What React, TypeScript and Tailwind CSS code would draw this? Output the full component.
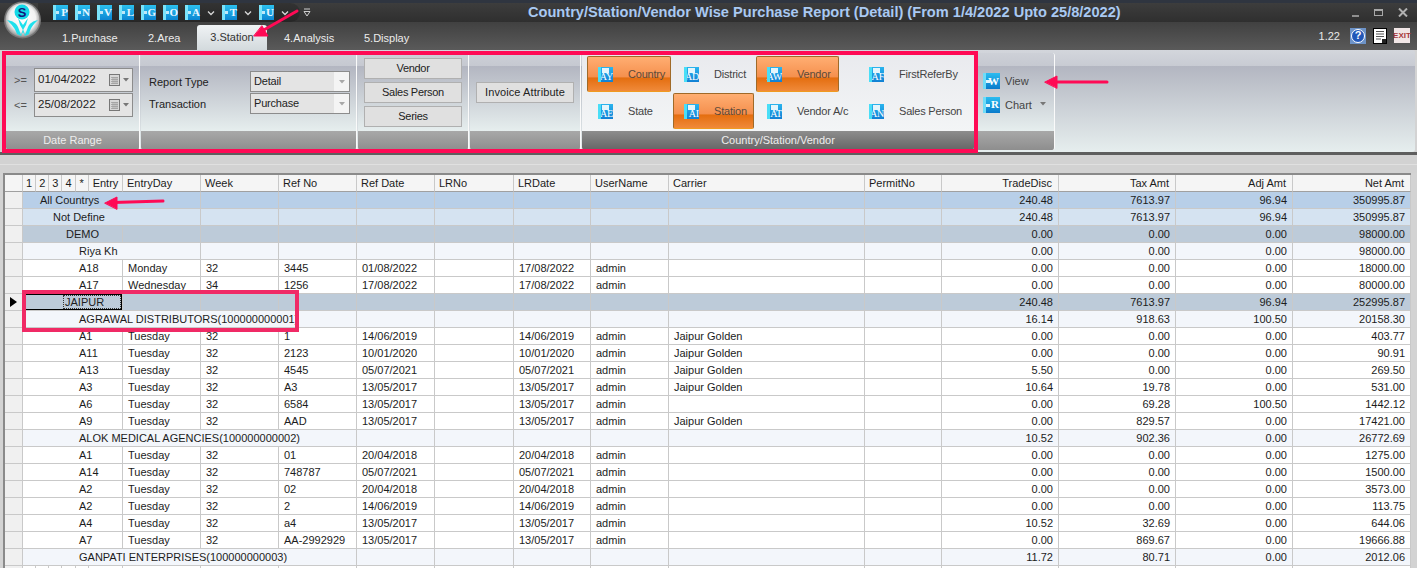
import React from "react";

const FONT = "font-['Liberation_Sans',Arial,sans-serif]";

type Row = {
  kind: "all" | "country" | "state" | "party" | "vendor" | "entry";
  label: string;
  day?: string;
  week?: string;
  ref?: string;
  date?: string;
  lrDate?: string;
  carrier?: string;
  amts: string[];
  selected?: boolean;
};

function entry(label: string, day: string, week: string, ref: string, date: string, carrier: string, amts: string[], lrDate?: string): Row {
  return { kind: "entry", label, day, week, ref, date, lrDate: lrDate ?? date, carrier, amts };
}

const JG = "Jaipur Golden";
const rows: Row[] = [
  { kind: "all", label: "All Countrys", amts: ["240.48", "7613.97", "96.94", "350995.87"] },
  { kind: "country", label: "Not Define", amts: ["240.48", "7613.97", "96.94", "350995.87"] },
  { kind: "state", label: "DEMO", amts: ["0.00", "0.00", "0.00", "98000.00"] },
  { kind: "party", label: "Riya Kh", amts: ["0.00", "0.00", "0.00", "98000.00"] },
  entry("A18", "Monday", "32", "3445", "01/08/2022", "", ["0.00", "0.00", "0.00", "18000.00"], "17/08/2022"),
  entry("A17", "Wednesday", "34", "1256", "17/08/2022", "", ["0.00", "0.00", "0.00", "80000.00"]),
  { kind: "state", label: "JAIPUR", selected: true, amts: ["240.48", "7613.97", "96.94", "252995.87"] },
  { kind: "vendor", label: "AGRAWAL DISTRIBUTORS(100000000001)", amts: ["16.14", "918.63", "100.50", "20158.30"] },
  entry("A1", "Tuesday", "32", "1", "14/06/2019", JG, ["0.00", "0.00", "0.00", "403.77"]),
  entry("A11", "Tuesday", "32", "2123", "10/01/2020", JG, ["0.00", "0.00", "0.00", "90.91"]),
  entry("A13", "Tuesday", "32", "4545", "05/07/2021", JG, ["5.50", "0.00", "0.00", "269.50"]),
  entry("A3", "Tuesday", "32", "A3", "13/05/2017", JG, ["10.64", "19.78", "0.00", "531.00"]),
  entry("A6", "Tuesday", "32", "6584", "13/05/2017", "", ["0.00", "69.28", "100.50", "1442.12"]),
  entry("A9", "Tuesday", "32", "AAD", "13/05/2017", JG, ["0.00", "829.57", "0.00", "17421.00"]),
  { kind: "vendor", label: "ALOK MEDICAL AGENCIES(100000000002)", amts: ["10.52", "902.36", "0.00", "26772.69"] },
  entry("A1", "Tuesday", "32", "01", "20/04/2018", "", ["0.00", "0.00", "0.00", "1275.00"]),
  entry("A14", "Tuesday", "32", "748787", "05/07/2021", "", ["0.00", "0.00", "0.00", "1500.00"]),
  entry("A2", "Tuesday", "32", "02", "20/04/2018", "", ["0.00", "0.00", "0.00", "3573.00"]),
  entry("A2", "Tuesday", "32", "2", "14/06/2019", "", ["0.00", "0.00", "0.00", "113.75"]),
  entry("A4", "Tuesday", "32", "a4", "13/05/2017", "", ["10.52", "32.69", "0.00", "644.06"]),
  entry("A7", "Tuesday", "32", "AA-2992929", "13/05/2017", "", ["0.00", "869.67", "0.00", "19666.88"]),
  { kind: "vendor", label: "GANPATI ENTERPRISES(100000000003)", amts: ["11.72", "80.71", "0.00", "2012.06"] },
];

const rowBg: Record<Row["kind"], string> = {
  all: "bg-[#b8cfe8]",
  country: "bg-[#d5e3f1]",
  state: "bg-[#bdcbd9]",
  party: "bg-[#f3f6fb]",
  vendor: "bg-[#f3f6fb]",
  entry: "bg-white",
};
const indent: Record<Row["kind"], string> = {
  all: "pl-[17px]",
  country: "pl-[30px]",
  state: "pl-[43px]",
  party: "pl-[56px]",
  vendor: "pl-[56px]",
  entry: "pl-[56px]",
};

const colWidths = [18, 13, 13, 13, 13, 13, 34, 78, 78, 78, 78, 79, 77, 78, 196, 77, 117, 117, 117, 118];

const cell = "h-[17px] p-0 border-r border-b border-[#c9c9c9] whitespace-nowrap";
const left = `${cell} pl-[5px] text-left`;
const right = `${cell} pr-[5px] text-right`;
const head = "h-[17px] p-0 bg-[#f5f5f5] border-r border-b border-r-[#c9c9c9] border-b-[#a0a0a0] font-normal whitespace-nowrap";

function BlueIcon({ letter, big }: { letter: string; big?: boolean }) {
  if (big) {
    return (
      <span className="relative flex h-[16px] w-[17px] shrink-0 items-center justify-end bg-gradient-to-b from-[#2bbcf0] to-[#0b7bcb] pr-[1px] font-['Liberation_Serif',serif] text-[11px] font-bold leading-none text-white">
        <span className="absolute left-0 top-0 h-full w-[3px] bg-[#6fdcf8]" />
        <span className="absolute left-[3px] top-[7px] h-[3px] w-[4px] bg-[#e4f5fc]" />
        {letter}
      </span>
    );
  }
  return (
    <span className="relative flex h-[15px] w-[15px] shrink-0 items-end justify-end bg-gradient-to-b from-[#2ab4ee] to-[#1180d4] font-['Liberation_Serif',serif] text-[10px] leading-[10px] text-white">
      <span className="absolute left-0 top-0 h-full w-[3px] bg-[#49def7]" />
      <span className="absolute left-[4px] top-[1px] h-[5px] w-[7px] bg-[#e4f5fc]" />
      <span>A{letter}</span>
    </span>
  );
}

function ToolIcon({ letter, chevron }: { letter: string; chevron?: boolean }) {
  return (
    <div className="flex items-center">
      <span className="relative flex h-[15px] w-[15px] items-center justify-end bg-gradient-to-b from-[#2cc0ef] to-[#0c86d2] font-['Liberation_Serif',serif] text-[11px] font-bold leading-none text-[#e8f6ff]">
        <span className="absolute left-0 top-0 h-full w-[3px] bg-[#7be3fa]" />
        <span className="absolute left-[3px] top-[6px] h-[3px] w-[3px] bg-[#bfe7f7]" />
        {letter}
      </span>
      {chevron && (
        <svg width="8" height="6" viewBox="0 0 8 6" className="ml-[7px]">
          <path d="M1 1.5 L4 4.5 L7 1.5" fill="none" stroke="#d8d8d8" strokeWidth="1.3" />
        </svg>
      )}
    </div>
  );
}

function Logo() {
  return (
    <svg width="40" height="40" viewBox="0 0 40 40" className="absolute left-[3px] top-[0px]">
      <defs>
        <radialGradient id="lg" cx="50%" cy="45%" r="55%">
          <stop offset="0%" stopColor="#ffffff" />
          <stop offset="70%" stopColor="#f2f2f2" />
          <stop offset="100%" stopColor="#8f8f8f" />
        </radialGradient>
      </defs>
      <circle cx="19.5" cy="20" r="18.5" fill="#777" />
      <circle cx="19.5" cy="20" r="17" fill="url(#lg)" />
      <circle cx="19" cy="12" r="7.5" fill="#14d8e8" />
      <text x="19" y="16.5" textAnchor="middle" fontSize="13" fontWeight="700" fill="#15157a" fontFamily="Liberation Sans, sans-serif">S</text>
      <path d="M4 20 C10 21 13 23 15 27 L18 35 L20 29 L22 35 L25 27 C27 23 30 21 35 20 C30 25 28 27 26 34 L22 36 L20 32 L18 36 L14 34 C12 28 9 25 4 20 Z" fill="#1fe0ec" />
      <path d="M15 18 L20 25 L25 18 L23 25 L20 30 L17 25 Z" fill="#1fe0ec" />
    </svg>
  );
}

function DateField({ value }: { value: string }) {
  return (
    <div className="flex h-[24px] w-[99px] items-center border border-[#8c8c8c] bg-[#e4e4e4] pl-[3px] text-[11.5px] text-[#222]">
      <span className="w-[71px]">{value}</span>
      <svg width="11" height="12" viewBox="0 0 11 12">
        <rect x="0.5" y="0.5" width="10" height="11" fill="#d8d8d8" stroke="#777" />
        <path d="M2 3.5H9M2 5.5H9M2 7.5H9M2 9.5H9M4 3V10M6 3V10M8 3V10" stroke="#999" strokeWidth="0.7" />
      </svg>
      <svg width="6" height="4" viewBox="0 0 6 4" className="ml-[3px]">
        <path d="M0 0H6L3 3.5Z" fill="#777" />
      </svg>
    </div>
  );
}

function Combo({ value }: { value: string }) {
  return (
    <div className="flex h-[21px] w-[100px] items-center border border-[#8c8c8c] bg-[#e4e4e4] pl-[3px] text-[11px] tracking-[-0.2px] text-[#222]">
      <span className="flex-1">{value}</span>
      <span className="flex h-full w-[15px] items-center justify-center bg-[#f4f4f4]">
        <svg width="6" height="4" viewBox="0 0 6 4">
          <path d="M0 0H6L3 3.5Z" fill="#a8a8a8" />
        </svg>
      </span>
    </div>
  );
}

function PlainButton({ label, tight = true }: { label: string; tight?: boolean }) {
  return (
    <div className={`flex h-[21px] w-[98px] items-center justify-center border border-[#b0b0b0] bg-[#e0e0e0] text-[11px] text-[#222] ${tight ? "tracking-[-0.3px]" : "tracking-[0.1px]"}`}>
      {label}
    </div>
  );
}

function Group({ width, caption, dark, body, children }: { width: string; caption?: string; dark?: boolean; body?: string; children: React.ReactNode }) {
  return (
    <div className={`${width} flex h-[97px] shrink-0 flex-col overflow-hidden rounded-[3px] border-r border-[#fafafa]`}>
      <div className={`flex-1 ${body ?? "bg-[linear-gradient(#cdd0d7_0,#c6c9d1_13px,#b3b6c1_13px,#e6eeee_100%)]"}`}>{children}</div>
      <div
        className={`flex h-[19px] items-center justify-center text-[11px] text-[#eee] ${
          dark ? "bg-gradient-to-b from-[#8d8d8d] to-[#666]" : "bg-gradient-to-b from-[#a8a8a8] to-[#8e8e8e]"
        }`}
      >
        {caption}
      </div>
    </div>
  );
}

const pickers = [
  { label: "Country", letter: "Y", on: true, cls: "pl-[10px]" },
  { label: "District", letter: "D", on: false, cls: "pl-[11px]" },
  { label: "Vendor", letter: "W", on: true, cls: "pl-[10px]" },
  { label: "FirstReferBy", letter: "F", on: false, cls: "pl-[28px]" },
  { label: "State", letter: "E", on: false, cls: "pl-[11px]" },
  { label: "Station", letter: "I", on: true, cls: "pl-[10px]" },
  { label: "Vendor A/c", letter: "T", on: false, cls: "pl-[11px]" },
  { label: "Sales Person", letter: "N", on: false, cls: "pl-[28px]" },
];

export default function App() {
  return (
    <div className={`relative h-[568px] w-[1417px] overflow-hidden bg-[#d3d3d3] text-[11px] ${FONT}`}>
      {/* title bar */}
      <div className="flex h-[22px] items-center border-t-[3px] border-[#2f3540] bg-gradient-to-b from-[#3d3d3d] to-[#2f2f2f]">
        <div className="ml-[38px] flex h-[19px] w-[262px] items-center rounded-r-[14px] bg-gradient-to-b from-[#333] to-[#262626] pl-[15px]">
          <div className="flex items-center gap-[7px]">
            {["P", "N", "V", "L", "G", "O"].map((l) => (
              <ToolIcon key={l} letter={l} />
            ))}
            <ToolIcon letter="A" chevron />
            <ToolIcon letter="T" chevron />
            <ToolIcon letter="U" chevron />
          </div>
        </div>
        <svg width="8" height="9" viewBox="0 0 8 9" className="ml-[3px]">
          <path d="M1 1H7M1 3.5H7L4 8Z" fill="none" stroke="#cfcfcf" />
        </svg>
        <div className="ml-[217px] whitespace-nowrap text-[14.6px] font-bold text-[#a9c9f2]">
          Country/Station/Vendor Wise Purchase Report (Detail) (From 1/4/2022 Upto 25/8/2022)
        </div>
        <div className="ml-auto flex items-center gap-[15px] pr-[9px]">
          <span className="mt-[6px] h-[2px] w-[7px] bg-[#8f8f8f]" />
          <span className="h-[7px] w-[9px] border border-t-[2px] border-[#a8a8a8]" />
          <svg width="10" height="9" viewBox="0 0 10 9">
            <path d="M1 0.5L9 8.5M9 0.5L1 8.5" stroke="#b0b0b0" strokeWidth="2" />
          </svg>
        </div>
      </div>

      {/* tabs */}
      <div className="flex h-[28px] items-end bg-gradient-to-b from-[#414141] to-[#5a5a5a] pl-[62px] text-[11px] text-[#ececec]">
        <div className="mb-[4px] w-[86px]">1.Purchase</div>
        <div className="mb-[4px] w-[49px]">2.Area</div>
        <div className="flex h-[25px] w-[70px] items-center justify-center rounded-t-[3px] bg-gradient-to-b from-[#f0f3f5] to-[#d3dadd] text-[#333]">3.Station</div>
        <div className="mb-[4px] ml-[17px] w-[80px]">4.Analysis</div>
        <div className="mb-[4px]">5.Display</div>
        <div className="mb-[6px] ml-auto flex items-center pr-[7px]">
          <span className="mr-[10px] text-[11px] text-[#e8e8e8]">1.22</span>
          <span className="mr-[7px] flex h-[16px] w-[16px] items-center justify-center bg-[#6d93c8]">
            <span className="flex h-[14px] w-[14px] items-center justify-center rounded-full border border-white bg-[#2258b8] text-[11px] font-bold leading-none text-white">?</span>
          </span>
          <svg width="14" height="16" viewBox="0 0 14 16" className="mr-[7px]">
            <rect x="0.5" y="0.5" width="13" height="15" fill="#fff" stroke="#000" />
            <path d="M3 3.5H11M3 6H11M3 8.5H11M3 11H8" stroke="#555" />
            <rect x="9" y="11" width="4" height="4" fill="#222" />
          </svg>
          <span className="flex h-[15px] w-[16px] items-center justify-center bg-[#f1e6e6] text-[8px] font-bold leading-none text-[#a83a3a]">EXIT</span>
        </div>
      </div>

      {/* ribbon */}
      <div className="mx-[2px] flex h-[102px] items-start gap-[1px] rounded-[3px] bg-[linear-gradient(#d3d6dc_0,#c8cbd3_16px,#b3b6c1_16px,#e6eeee_100%)] pl-[4px] pt-[3px]">
        <Group width="w-[134px]" caption="Date Range">
          <div className="flex items-start pl-[8px] pt-[15px]">
            <div className="w-[20px] text-[11px] leading-[25px] text-[#555]">
              <div>{">="}</div>
              <div>{"<="}</div>
            </div>
            <div className="flex flex-col gap-[1px]">
              <DateField value="01/04/2022" />
              <DateField value="25/08/2022" />
            </div>
          </div>
        </Group>
        <Group width="w-[216px]" caption="">
          <div className="flex gap-[21px] pl-[8px] pt-[18px]">
            <div className="w-[80px] text-[11px] leading-[22px] text-[#222]">
              <div>Report Type</div>
              <div>Transaction</div>
            </div>
            <div className="flex flex-col gap-[1px]">
              <Combo value="Detail" />
              <Combo value="Purchase" />
            </div>
          </div>
        </Group>
        <Group width="w-[111px]" caption="">
          <div className="flex flex-col gap-[3px] pl-[6px] pt-[5px]">
            <PlainButton label="Vendor" />
            <PlainButton label="Sales Person" />
            <PlainButton label="Series" />
          </div>
        </Group>
        <Group width="w-[111px]" caption="">
          <div className="pl-[6px] pt-[29px]">
            <PlainButton label="Invoice Attribute" tight={false} />
          </div>
        </Group>
        <Group width="w-[393px]" caption="Country/Station/Vendor" dark body="bg-gradient-to-b from-[#e9eaee] to-[#f3f5f6]">
          <div className="grid grid-cols-[84px_81px_83px_125px] grid-rows-[36px_36px] gap-x-[2px] gap-y-[1px] pl-[5px] pt-[3px]">
            {pickers.map((p) => (
              <div
                key={p.label}
                className={`flex items-center whitespace-nowrap tracking-[-0.2px] ${p.cls} text-[11px] ${
                  p.on
                    ? "rounded-[2px] border border-[#a06a28] border-b-[#f09a20] bg-[linear-gradient(#ffae72_0,#f5904e_58%,#e46e10_62%,#f08a3a_100%)] text-[#5a4a3a]"
                    : "text-[#444]"
                }`}
              >
                <span className="mr-[15px]">
                  <BlueIcon letter={p.letter} />
                </span>
                {p.label}
              </div>
            ))}
          </div>
        </Group>
        <Group width="w-[79px]">
          <div className="flex flex-col gap-[7px] pl-[7px] pt-[20px] text-[11px] text-[#444]">
            <div className="flex items-center gap-[5px]">
              <BlueIcon letter="W" big />
              View
            </div>
            <div className="flex items-center gap-[5px]">
              <BlueIcon letter="R" big />
              Chart
              <svg width="6" height="4" viewBox="0 0 6 4" className="ml-[3px] mb-[2px]">
                <path d="M0 0H6L3 3.5Z" fill="#777" />
              </svg>
            </div>
          </div>
        </Group>
      </div>

      {/* strip above grid */}
      <div className="h-[21px] border-t-[3px] border-[#5e5e5e] bg-[#d2d2d2]">
        <div className="h-[9px]" />
        <div className="h-[1px] bg-[#e0e0e0]" />
      </div>

      {/* grid */}
      <div className="ml-[3px] w-[1408px] border-l-2 border-t-2 border-[#8a8a8a] bg-white">
        <table className="table-fixed border-separate border-spacing-0 text-[11px] leading-[14px] text-[#1c1c1c]">
          <colgroup>
            {colWidths.map((w, i) => (
              <col key={i} style={{ width: w }} />
            ))}
          </colgroup>
          <thead>
            <tr>
              <th className={head} />
              {["1", "2", "3", "4", "*"].map((h) => (
                <th key={h} className={`${head} text-center`}>{h}</th>
              ))}
              {["Entry", "EntryDay", "Week", "Ref No", "Ref Date", "LRNo", "LRDate", "UserName", "Carrier", "PermitNo"].map((h) => (
                <th key={h} className={`${head} pl-[4px] text-left`}>{h}</th>
              ))}
              {["TradeDisc", "Tax Amt", "Adj Amt", "Net Amt"].map((h) => (
                <th key={h} className={`${head} pr-[6px] text-right`}>{h}</th>
              ))}
            </tr>
          </thead>
          <tbody>
            {rows.map((r, i) => {
              const span = r.kind === "vendor" ? 9 : r.kind === "all" || r.kind === "country" || r.kind === "party" ? 7 : 6;
              return (
                <tr key={i} className={rowBg[r.kind]}>
                  <td className={`${cell} bg-[#f0f0f0]`}>
                    {r.selected && (
                      <svg width="7" height="10" viewBox="0 0 7 10" className="ml-[5px]">
                        <path d="M0 0L7 5L0 10Z" fill="#000" />
                      </svg>
                    )}
                  </td>
                  <td colSpan={span} className={`${cell} ${r.selected ? "" : indent[r.kind]}`}>
                    {r.selected ? (
                      <div className="ml-[2px] flex h-[16px] w-[97px] justify-end border border-black">
                        <span className="w-[58px] border border-dotted border-[#333] pl-[1px] leading-[12px]">{r.label}</span>
                      </div>
                    ) : (
                      r.label
                    )}
                  </td>
                  {span === 6 && <td className={left}>{r.day}</td>}
                  {r.kind !== "vendor" && <td className={left}>{r.week}</td>}
                  {r.kind !== "vendor" && <td className={left}>{r.ref}</td>}
                  <td className={left}>{r.date}</td>
                  <td className={left} />
                  <td className={left}>{r.lrDate}</td>
                  <td className={left}>{r.kind === "entry" ? "admin" : ""}</td>
                  <td className={left}>{r.carrier}</td>
                  <td className={left} />
                  {r.amts.map((a, j) => (
                    <td key={j} className={right}>{a}</td>
                  ))}
                </tr>
              );
            })}
            <tr>
              {colWidths.map((_, i) => (
                <td key={i} className={`${cell} ${i === 0 ? "bg-[#f0f0f0]" : ""}`} />
              ))}
            </tr>
          </tbody>
        </table>
      </div>

      {/* red annotations drawn over the screenshot */}
      <div className="pointer-events-none absolute left-[2px] top-[51px] h-[102px] w-[976px] border-4 border-[#ff0a55]" />
      <div className="pointer-events-none absolute left-[22px] top-[290px] h-[42px] w-[277px] border-4 border-[#f02a66]" />
      <svg width="1417" height="568" viewBox="0 0 1417 568" className="pointer-events-none absolute left-0 top-0">
        <g stroke="#ff0a55" strokeWidth="3" strokeLinecap="round" fill="#ff0a55">
          <path d="M297 11L262 31" fill="none" />
          <path d="M254 36L268 36L262 26Z" strokeWidth="1" />
          <path d="M1107 82L1053 82" fill="none" />
          <path d="M1045 82L1057 76L1057 88Z" strokeWidth="1" />
          <path d="M163 201L113 202.5" fill="none" />
          <path d="M105 203L117 197L117 209Z" strokeWidth="1" />
        </g>
      </svg>
      <div className="absolute left-0 top-0">
        <Logo />
      </div>
    </div>
  );
}
